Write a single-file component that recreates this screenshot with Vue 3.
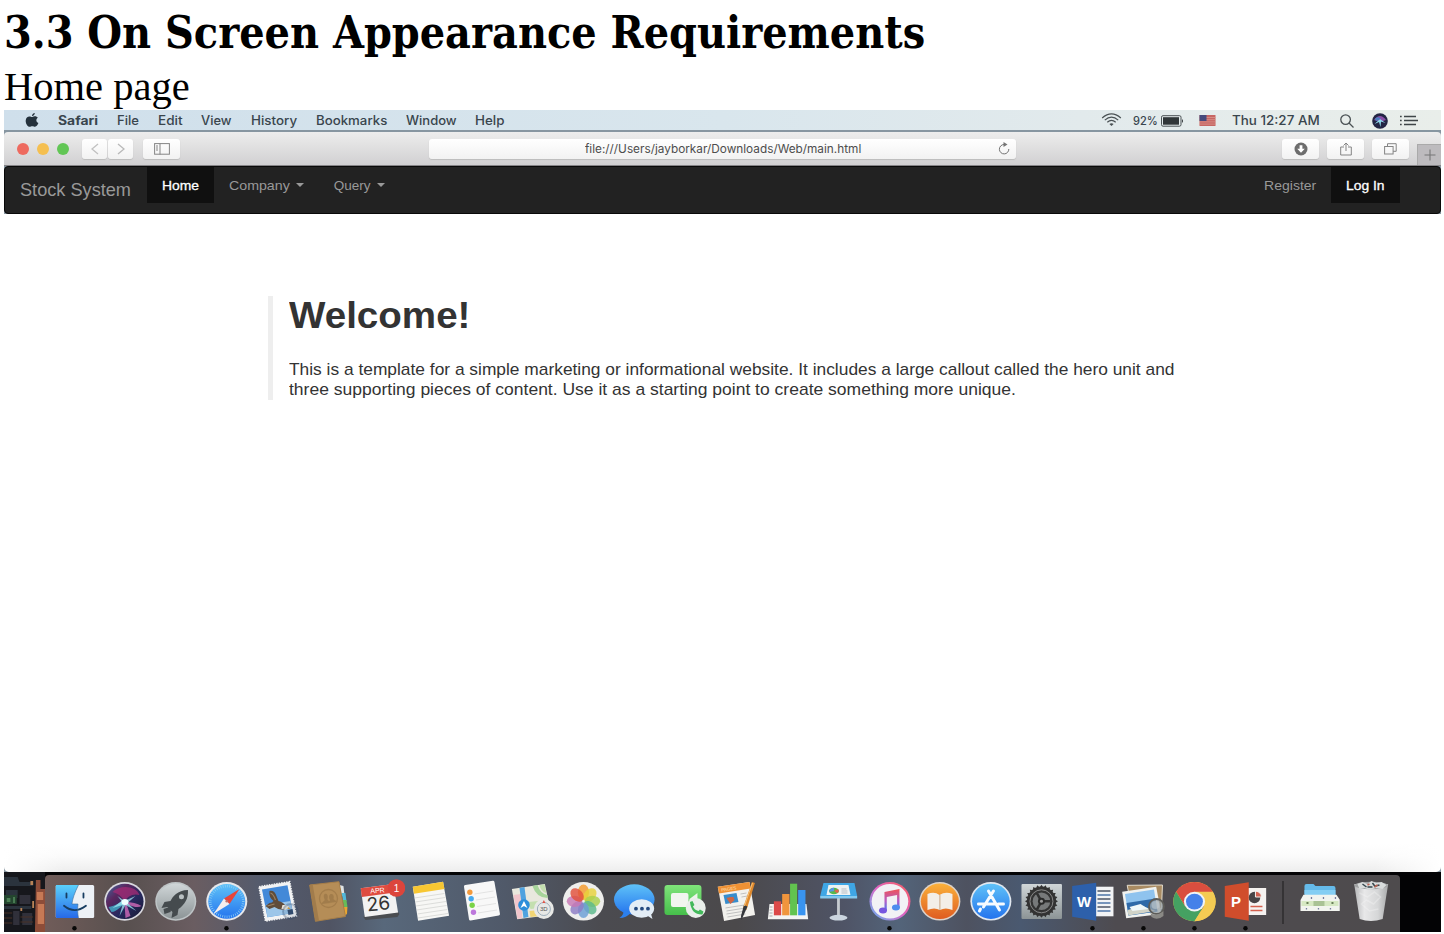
<script setup>
// Stretches a text run horizontally to the given width and reserves that width in the flow.
const vFit = {
  mounted(el, binding) {
    const natural = el.offsetWidth
    el.style.transform = `scaleX(${binding.value / natural})`
    el.style.marginRight = `${binding.value - natural}px`
  },
}

const menus = [
  ['Safari', 40], ['File', 22], ['Edit', 25], ['View', 31], ['History', 46],
  ['Bookmarks', 71], ['Window', 51], ['Help', 30],
]
const petals = ['#f49a2c', '#e8d23a', '#a9cf4c', '#5bb98b', '#6b9fd6', '#8c7cc4', '#c777b5', '#e2503c']
const ticks = Array.from({ length: 24 }, (_, i) => i * 15)
</script>

<template>
  <div class="page">
    <h1 class="doc-title"><span v-fit="921" class="fit">3.3 On Screen Appearance Requirements</span></h1>
    <p class="doc-sub"><span v-fit="186" class="fit">Home page</span></p>

    <div class="screen">
      <div class="menubar">
        <svg class="apple" viewBox="0 0 14 14"><path d="M9.8 0C9.9 1.6 8.5 3.1 7 3 6.9 1.500 8.300.200 9.800 0ZM10 3.300c1.200 0 2.200.600 2.900 1.500-2.300 1.400-1.900 4.400.500 5.300-.600 1.600-1.900 3.700-3.400 3.700-1 0-1.500-.600-2.700-.600s-1.700.600-2.700.600C2.700 13.800.500 10.500.700 7.400.900 4.900 2.500 3.400 4.400 3.400c1.200 0 2 .6 2.900.6S9 3.300 10 3.300Z" fill="#24313c" /></svg>
        <div class="menu-items">
          <span v-for="(m, i) in menus" :key="m[0]" v-fit="m[1]" class="fit" :class="{ strong: i === 0 }">{{ m[0] }}</span>
        </div>
        <div class="status">
          <svg class="wifi" viewBox="0 0 22 15" fill="none" stroke="#4a5154" stroke-width="1.300"><path d="M1 5.300Q11-3.300 21 5.300M3.800 7.600Q11 1.400 18.200 7.600M6.500 9.900Q11 6 15.500 9.900" /><path d="M8.700 11.800Q11 10 13.300 11.800L11 14Z" fill="#4a5154" stroke="none" /></svg>
          <span v-fit="25" class="fit pct">92%</span>
          <svg class="battery" viewBox="0 0 23 12"><rect x=".5" y=".7" width="19.500" height="10.500" rx="1.500" fill="none" stroke="#4a5154" /><rect x="2" y="2.200" width="16" height="7.500" fill="#303638" /><path d="M21 4q2 2 0 4z" fill="#303638" /></svg>
          <svg class="flag" viewBox="0 0 16 11"><rect width="16" height="11" fill="#c76663" /><path d="M0 2.500h16M0 4.700h16M0 6.900h16M0 9.100h16" stroke="#d9958d" stroke-width=".8" /><rect width="7" height="6" fill="#464a7c" /></svg>
          <span v-fit="88" class="fit">Thu 12:27 AM</span>
          <svg class="lens" viewBox="0 0 14 14" fill="none" stroke="#4a5154" stroke-width="1.300"><circle cx="5.600" cy="5.600" r="4.800" /><path d="m9 9 4.500 4.500" /></svg>
          <svg class="mini-siri" viewBox="0 0 16 16"><circle cx="8" cy="8" r="7.800" fill="#232544" /><path d="M2 7Q8-1 14 7L8 9Z" fill="#8a4fa8" /><path d="m2.500 11 5.500-5 5.500 4-4.500-1.500L8.500 14 7 9z" fill="#8fdcee" /><path d="M3 5.500Q7 3 8.500 6L4 8Z" fill="#487fc0" /></svg>
          <svg class="list" viewBox="0 0 18 11" stroke="#3f4648" stroke-width="1.700"><path d="M4 1.500h12M4 5.500h14M4 9.500h12" /><path d="M0 1.500h1.700M0 5.500h1.700M0 9.500h1.700" /></svg>
        </div>
      </div>

      <div class="window">
        <div class="toolbar">
          <div class="lights"><i class="red"></i><i class="amber"></i><i class="green"></i></div>
          <div class="btn nav-btn"><svg viewBox="0 0 8 12"><path d="M7 1 1 6l6 5" fill="none" stroke="#c1c1c1" stroke-width="1.300" /></svg></div>
          <div class="btn nav-btn fwd"><svg viewBox="0 0 8 12"><path d="m1 1 6 5-6 5" fill="none" stroke="#b9b9b9" stroke-width="1.300" /></svg></div>
          <div class="btn side-btn"><svg class="side" viewBox="0 0 16 12" fill="none" stroke="#858585"><rect x=".6" y=".6" width="14.800" height="10.600" /><path d="M6 .5v11M2 3h2M2 5h2M2 7h2" /></svg></div>
          <div class="address">
            <span v-fit="276" class="fit">file:///Users/jayborkar/Downloads/Web/main.html</span>
            <svg class="reload" viewBox="0 0 12 13"><path d="M6 2.500A4.700 4.700 0 1 0 10.800 7" fill="none" stroke="#747474" /><path d="M5.500 0 9.500 2.600 5.500 5z" fill="#747474" /></svg>
          </div>
          <div class="btn r1"><svg class="dl" viewBox="0 0 14 14"><circle cx="7" cy="7" r="6.500" fill="#6d6d6d" /><path d="M5.600 3.200h2.800v3.500h2.400L7 10.800 3.200 6.700h2.400z" fill="#fff" /></svg></div>
          <div class="btn r2"><svg class="share" viewBox="0 0 12 14" fill="none" stroke="#858585"><path d="M4 5H.7v8h10.600V5H8M6 9V1M3.500 3.500 6 1l2.500 2.500" /></svg></div>
          <div class="btn r3"><svg class="tabs" viewBox="0 0 13 12" fill="none" stroke="#858585"><rect x=".6" y="3.500" width="8.500" height="7.500" /><path d="M3.500 3.500V.7h8.700v7.600H9.100" /></svg></div>
          <div class="plus"><svg viewBox="0 0 12 12"><path d="M6 .5v11M.5 6h11" stroke="#777" stroke-width="1.100" /></svg></div>
        </div>

        <nav class="navbar">
          <div class="brand"><span v-fit="111" class="fit">Stock System</span></div>
          <div class="tab on home"><span v-fit="37" class="fit">Home</span></div>
          <div class="tab drop"><span v-fit="61" class="fit">Company</span><i class="caret"></i></div>
          <div class="tab drop"><span v-fit="37" class="fit">Query</span><i class="caret"></i></div>
          <div class="tab register"><span v-fit="52" class="fit">Register</span></div>
          <div class="tab on login"><span v-fit="39" class="fit">Log In</span></div>
        </nav>

        <main class="body">
          <section class="hero">
            <h2><span v-fit="181" class="fit">Welcome!</span></h2>
            <p><span v-fit="885" class="fit">This is a template for a simple marketing or informational website. It includes a large callout called the hero unit and</span></p>
            <p><span v-fit="727" class="fit">three supporting pieces of content. Use it as a starting point to create something more unique.</span></p>
          </section>
        </main>
      </div>

      <footer class="desktop">
        <svg class="city" viewBox="0 0 45 60" preserveAspectRatio="none">
          <rect width="45" height="60" fill="#16171c" />
          <path d="M0 5h15l2 5h15v4H0zM2 18h13v8H2zM0 34h30v3H0z" fill="#2b333d" />
          <path d="M0 23h14v9H0z" fill="#24452f" /><path d="M3 26h4v4H3zM10 25h2v6h-2z" fill="#4c8055" />
          <path d="M17 23h12v9H17zM10 39h7v14h-7zM20 41h11v12H20z" fill="#30303a" />
          <path d="M35 8h5v9h5v43H34z" fill="#8d4d39" /><path d="M36 20h7v8h-7zM37 32h7v20h-7z" fill="#c67955" />
          <path d="M29 9h3v4h-3zM31 29h2v7h-2zM18 36h2v3h-2z" fill="#b88357" />
          <path d="M0 41h9M0 46h9M0 51h9M18 45h14M18 50h14" stroke="#493126" />
        </svg>
        <div class="dock">
          <svg class="icon" viewBox="-25.475 -27 50.95 57">
            <defs>
              <linearGradient id="finder" x2="0" y2="1"><stop stop-color="#5bd0fb" /><stop offset="1" stop-color="#2769e8" /></linearGradient>
              <linearGradient id="silver" x2="0" y2="1"><stop stop-color="#d0d6d8" /><stop offset="1" stop-color="#8c9496" /></linearGradient>
              <linearGradient id="blue" x2="0" y2="1"><stop stop-color="#5fc2f8" /><stop offset="1" stop-color="#2474ee" /></linearGradient>
              <linearGradient id="orange" x2="0" y2="1"><stop stop-color="#fbb13b" /><stop offset="1" stop-color="#df5c20" /></linearGradient>
              <linearGradient id="siri" x2="1" y2="1"><stop stop-color="#3c6ca4" /><stop offset=".3" stop-color="#5b275f" /><stop offset=".6" stop-color="#27295f" /><stop offset="1" stop-color="#171831" /></linearGradient>
              <linearGradient id="green" x2="0" y2="1"><stop stop-color="#7fe47a" /><stop offset="1" stop-color="#46bf4b" /></linearGradient>
              <linearGradient id="note" x2="0" y2="1"><stop stop-color="#f05257" /><stop offset=".55" stop-color="#b45dc8" /><stop offset="1" stop-color="#447bec" /></linearGradient>
              <linearGradient id="ring" x1="1" x2="0" y2="1"><stop stop-color="#fb5a54" /><stop offset=".5" stop-color="#dd66c6" /><stop offset="1" stop-color="#5bb8f6" /></linearGradient>
              <linearGradient id="can"><stop stop-color="#b5b6b8" /><stop offset=".3" stop-color="#e8e8e9" /><stop offset=".7" stop-color="#d5d6d7" /><stop offset="1" stop-color="#a9aaab" /></linearGradient>
            </defs>
            <rect x="-18.700" y="-17" width="38.400" height="33" rx="1.500" fill="#edf1f6" />
            <path d="M-17.700-17H4C0-9-2-3-2.500 2h6C3 7 3.200 12 4 16h-21.700q-1 0-1-1v-31q0-1 1-1Z" fill="url(#finder)" />
            <path d="M-8-8.500v4M9-8.500v4M-10.500 3.800Q0 12.500 11.500 3.800" fill="none" stroke="#173d61" stroke-width="1.800" stroke-linecap="round" /><path d="M4-17C0-9-2-3-2.500 2h6C3 7 3.200 12 4 16" fill="none" stroke="#3b6d9b" stroke-width=".6" />
            <circle cy="26.300" r="2.200" fill="#080808" />
          </svg>

          <svg class="icon" viewBox="-25.475 -27 50.95 57">
            <ellipse cx=".3" cy="-.6" rx="20.500" ry="19.300" fill="#d9d9df" /><ellipse cx=".3" cy="-.6" rx="18.800" ry="17.600" fill="url(#siri)" />
            <path d="M-12-10C-4-18 12-16 15-7 8-9 3-5 0-1-3-6-7-9-12-10Z" fill="#a42c75" fill-opacity=".75" /><path d="M-16 5C-9 4-3 0 0-3l3 3C-3 3-7 10-13 10Z" fill="#43b8d1" fill-opacity=".75" /><path d="M0 0Q11 0 17 4 13 7 2 2L6 14 1 16Z" fill="#d26bba" fill-opacity=".8" /><path d="M0-1 11-6 3 1 12 9 1 3-5 14-2 3-12 6-3-1-7-6Z" fill="#9feaf3" fill-opacity=".75" /><ellipse cx=".500" rx="3.500" ry="3" fill="#f0ffff" />
          </svg>

          <svg class="icon" viewBox="-25.475 -27 50.95 57">
            <ellipse cx=".3" cy="-.6" rx="20.500" ry="19.300" fill="#bec4c6" /><ellipse cx=".3" cy="-.6" rx="19" ry="17.800" fill="url(#silver)" />
            <path d="M12.500-12C2-12-3-5-5-1l-6 1-3 6 6-1 5 5-1 6 6-3 1-6C9 3 13-3 12.500-12Z" fill="#454b4e" /><path d="M-6 5-12 7-11 12-5 10-4 6Z" fill="#454b4e" /><circle cx="6" cy="-5.300" r="2.500" fill="#b9c0c2" />
          </svg>

          <svg class="icon" viewBox="-25.475 -27 50.95 57">
            <ellipse cx=".3" cy="-.6" rx="20.500" ry="19.300" fill="#e6e8eb" /><ellipse cx=".3" cy="-.6" rx="18.500" ry="17.300" fill="url(#blue)" />
            <ellipse cx=".3" cy="-.6" rx="16.500" ry="15.300" fill="none" stroke="#8ed0f5" stroke-width="2.500" stroke-dasharray=".7 1.500" />
            <path d="M13-13-2.500-3.500 3 2Z" fill="#e8453b" /><path d="M-13 12-2.500-3.500 3 2Z" fill="#f4eeee" /><circle cx=".3" cy="-.7" r="1.300" fill="#bc706c" />
            <circle cy="26.300" r="2.200" fill="#080808" />
          </svg>

          <svg class="icon" viewBox="-25.475 -27 50.95 57">
            <path d="M-18.500-15.300 12.200-20.300 18.900 14-12 19Z" fill="#f2f3f4" stroke="#f2f3f4" stroke-width="1.600" stroke-dasharray="1.500 1" />
            <path d="M-15.500-12.500 10-16.700 15.500 11-10 15.300Z" fill="#4389d8" /><path d="M-12 3 13-1 15.500 11-10 15.300Z" fill="#9cc6e9" />
            <path d="M-8-11Q-3-12-1-6L1-1Q6 0 9 5L6 8Q1 8-3 5L-8 7-12 4-8 1Q-5 1-4-1-9-5-8-11Z" fill="#5f4c3b" /><path d="M-7-9q3 1 5 7M-10 4l7-2" fill="none" stroke="#9a8061" stroke-width="1.200" /><path d="m5 3 4 0 3 2-4 3-4-1Z" fill="#ece7da" /><path d="m11 5 2 2-3 0z" fill="#e2a43a" />
            <circle cx="13" cy="9.500" r="7.500" fill="#31486a" fill-opacity=".12" stroke="#31486a" stroke-opacity=".3" stroke-width="2" /><path d="m10 8 5-1 1 5-5 1z" fill="#304a6d" />
          </svg>

          <svg class="icon" viewBox="-25.475 -27 50.95 57">
            <path d="m11-17 4 1 1 9-3 1z" fill="#e0e4e5" /><path d="m13-9 4 0 1 8-3 1z" fill="#53b9da" /><path d="m14-2 4 0 1 7-3 1z" fill="#67bb58" /><path d="m15 5 4 0-.5 7-2.500 2z" fill="#e9a631" />
            <path d="M-18.800-17 10.500-20.300 17 14.500-13 19.300Z" fill="#b58d57" stroke="#a77e48" stroke-linejoin="round" /><path d="M-18.800-17l3-.4L-9.500 18.500-13 19.300Z" fill="#a17c4c" />
            <circle cy="-3.500" r="9" fill="none" stroke="#a37d4b" stroke-width="1.300" /><path d="M-7 2c1-3 4-3 3-5-3-7 5-7 3 0 0 2 2 1 3 4M0 1c1-3 2-2 1-4-2-7 6-6 4 0 0 1 3 1 3 3" fill="#a17c4b" />
          </svg>

          <svg class="icon" viewBox="-25.475 -27 50.95 57">
            <path d="m-15 13 33-4 2 3-2 3-32 3-2-3z" fill="#4a4d51" /><path d="M-18.700-13.700 14-18 18.600 10.500-14.700 15Z" fill="#f2f2f2" /><path d="M-18.700-13.700 14-18 15.500-9.500-17.700-5Z" fill="#df4c40" />
            <text x="-9" y="-8.500" class="apr" transform="rotate(-5 -9 -9)">APR</text><text x="-12" y="9.500" class="day" transform="rotate(-6 -12 10)">26</text>
            <circle cx="17" cy="-14" r="8.800" fill="#dc453c" /><text x="17" y="-10.500" class="badge">1</text>
          </svg>

          <svg class="icon" viewBox="-25.475 -27 50.95 57">
            <path d="M-17.700-15.300 12.600-20.300 18.600 13.700-12.400 18.700Z" fill="#f7f7f5" /><path d="M-17.700-15.300 12.600-20.300 14-13-16.500-8.300Z" fill="#f7c733" />
            <path d="m-16-4 30-4.500M-15.300 0l30-4.500M-14.500 4l30-4.500M-13.800 8l30-4.500M-13 12l30-4.500M-12.500 16l30-4.500" stroke="#d4d5d3" stroke-width=".8" />
          </svg>

          <svg class="icon" viewBox="-25.475 -27 50.95 57">
            <path d="M-16-15.500 11.500-19.800 17 12-11 17Z" fill="#f8f8f8" stroke="#f8f8f8" stroke-width="3" stroke-linejoin="round" />
            <path d="m-7-8 19-3M-5.500-2l19-3M-4.500 4.500l19-3M-3.500 11l19-3" stroke="#ddd" stroke-width=".8" /><circle cx="-11.600" cy="-9.700" r="2.700" fill="#f39a3d" /><circle cx="-10.300" cy="-3.300" r="2.700" fill="#44a9ef" /><circle cx="-9.300" cy="3.300" r="2.700" fill="#7bd348" /><circle cx="-8" cy="10.300" r="2.700" fill="#bd78dc" />
          </svg>

          <svg class="icon" viewBox="-25.475 -27 50.95 57">
            <path d="M-20.600-13 12.400-18 19 13-15.300 17.300Z" fill="#e9e8dd" /><path d="M0-16Q4-4 15-4V-7Q8-8 5-17Z" fill="#a6d49a" /><path d="m7-17 5-.7 2 9Q8-11 7-17ZM-4 0 15-2 17 5-2 7Z" fill="#c4dfb0" /><path d="m-19-7 7-1 2 24-5 1Z" fill="#f1c5cb" /><path d="m-13-14 5-1L-4 15l-5 1Z" fill="#4fa2df" /><path d="m-3 9 20-2 2 6-21 2Z" fill="#f1d575" />
            <circle cx="-8.500" cy="3" r="5.800" fill="#2c8eda" /><path d="m-8.500-1 3.500 7-3.500-2L-12 6Z" fill="#fff" />
            <circle cx="11.400" cy="7" r="10" fill="#e7e8e6" /><circle cx="11.400" cy="7" r="6.500" fill="none" stroke="#9cadba" /><text x="11.400" y="9.200" class="three">3D</text><path d="m11.400-2 1.500 3h-3z" fill="#df5345" />
          </svg>

          <svg class="icon" viewBox="-25.475 -27 50.95 57">
            <ellipse cy="-.7" rx="20.500" ry="19.300" fill="#eeeeec" /><g transform="translate(0 -.7)"><ellipse v-for="(c, i) in petals" :key="c" cy="-9" rx="5.600" ry="7.700" :fill="c" fill-opacity=".82" :transform="`rotate(${i * 45})`" /></g>
          </svg>

          <svg class="icon" viewBox="-25.475 -27 50.95 57">
            <ellipse cx="-.2" cy="-2.500" rx="20.300" ry="15.200" fill="url(#blue)" /><path d="M-11 7q1 6-4 9 7 0 11-5z" fill="#2c80ee" /><ellipse cx="7.200" cy="6.500" rx="12.500" ry="9.300" fill="#e3edf6" /><path d="m12 13 6 4-2-7z" fill="#e3edf6" /><g fill="#244a80"><circle cx="1.500" cy="6.700" r="1.900" /><circle cx="7.500" cy="6.700" r="1.900" /><circle cx="13.500" cy="6.700" r="1.900" /></g>
          </svg>

          <svg class="icon" viewBox="-25.475 -27 50.95 57">
            <rect x="-21" y="-17" width="37" height="30" rx="3" fill="url(#green)" /><rect x="-14.500" y="-9" width="17.500" height="14" rx="2" fill="#f1f5ef" /><path d="m4-3 8-6V5L4 2Z" fill="#edf4ea" /><circle cx="10.300" cy="6" r="10" fill="#e9eeea" /><path d="M4.500 0 7-1 9 3 7.500 4.500Q9 8 13 9l1.500-1.500 3.500 2-1 3Q6 13 4.500 0Z" fill="#43b95b" />
          </svg>

          <svg class="icon" viewBox="-25.475 -27 50.95 57">
            <path d="M-18.700-15.300 13-20 18.600 13-12.400 19Z" fill="#f2f1ed" /><path d="M-18.700-15.300 13-20 14-13.500-17.500-8.500Z" fill="#ef9134" /><text x="-15" y="-10.500" class="pages" transform="rotate(-8 -15 -10)">PAGES</text><path d="m-13-7 13-2 2 9-13 2Z" fill="#388dcc" /><path d="m-10-4 4-1 3 0 1 3-4 4z" fill="#ce6644" /><path d="m4-8 6-1M5-5l6-1M-11 6 8 3M-10 9 9 6M-10 12l19-3M-9 15l18-3" stroke="#bbb" stroke-width=".9" />
            <path d="m15.500-20 3 1L10 8 6.500 6Z" fill="#df892d" /><path d="m7.500 3 3.500 1.500L5 18 4.500 14Z" fill="#34363b" /><path d="m16-19-8 23" stroke="#f7c276" />
          </svg>

          <svg class="icon" viewBox="-25.475 -27 50.95 57">
            <path d="M-18 2h37l1.700 15.300h-40.300Z" fill="#f4f4f3" /><path d="M-18 5h3M-18 8h3M-18 11h3M-18 14h3" stroke="#aaa" /><rect x="-13.600" y="-.7" width="7.300" height="14" fill="#dc4949" /><rect x="-5.300" y="-8" width="7.300" height="21.300" fill="#f0953d" /><rect x="2.600" y="-18.300" width="7.100" height="31.600" fill="#62c34f" /><rect x="10.700" y="-12" width="7.300" height="25.300" fill="#3994f0" />
          </svg>

          <svg class="icon" viewBox="-25.475 -27 50.95 57">
            <path d="M-1.400-6h2.800v21h-2.800z" fill="#c6cbd0" /><ellipse cy="15.700" rx="9" ry="2.900" fill="#cbd5df" /><path d="M-15-19h31l2.700 13h-37Z" fill="#3fa6e5" /><path d="M-18.300-6h37v2.500h-37z" fill="#83c9ef" /><path d="m-10-17 20-.1L12-7h-24Z" fill="#edf2f4" /><ellipse cx="-4.500" cy="-11" rx="5" ry="3.200" fill="#55b84e" /><path d="M-4.500-11v-3.200Q-9-14-9.500-10Z" fill="#5896e2" /><path d="m-4.500-11 4-2q2 3-1 4z" fill="#e26250" /><path d="M3-13h5M3-11h6M3-9h6" stroke="#b8bec4" />
          </svg>

          <svg class="icon" viewBox="-25.475 -27 50.95 57">
            <ellipse cx=".5" cy="-.7" rx="20.500" ry="19.300" fill="url(#ring)" /><ellipse cx=".5" cy="-.7" rx="18.300" ry="17.300" fill="#f2f1f5" /><path d="M-5-10 10-13V6h-2.400V-7L-2.700-5V9H-5Z" fill="url(#note)" /><ellipse cx="-6.500" cy="8.500" rx="4" ry="3" fill="#7755df" /><ellipse cx="6.500" cy="5.600" rx="4" ry="3" fill="#4c8def" /><circle cy="26.300" r="2.200" fill="#080808" />
          </svg>

          <svg class="icon" viewBox="-25.475 -27 50.95 57">
            <ellipse cx=".4" cy="-.7" rx="20.500" ry="19.300" fill="#ddd3ca" /><ellipse cx=".4" cy="-.7" rx="19" ry="17.800" fill="url(#orange)" /><path d="M-12-8Q-5-11 0-7 6-11 13-8V8Q6 5 .4 8-5 5-12 8Z" fill="#f3eee8" /><path d="M.4-7V8" stroke="#d1b79d" stroke-width="1.300" />
          </svg>

          <svg class="icon" viewBox="-25.475 -27 50.95 57">
            <ellipse cx=".4" cy="-.7" rx="20.500" ry="19.300" fill="#e1e8f0" /><ellipse cx=".4" cy="-.7" rx="18.800" ry="17.600" fill="url(#blue)" /><path d="M-2-11 9 8M3-11-7 5M-12 2H4M8 2h5M-10 7l-1 2" fill="none" stroke="#f7fbff" stroke-width="3" stroke-linecap="round" />
          </svg>

          <svg class="icon" viewBox="-25.475 -27 50.95 57">
            <rect x="-20" y="-18" width="40.500" height="35" rx="1" fill="url(#silver)" /><circle cy="-.7" r="14.700" fill="#333" /><g transform="translate(0 -.7)"><path v-for="a in ticks" :key="a" d="m-1-15 1-1.500 1 1.500v2h-2z" fill="#333" :transform="`rotate(${a})`" /><circle r="11.500" fill="none" stroke="#888" /><circle r="8.800" fill="#77797a" /><path d="M0 0-4.500-8M0 0h9M0 0l-4.500 8" stroke="#303030" stroke-width="2.500" /><circle r="3.500" fill="#292929" /><circle r="1.500" fill="#999" /></g>
          </svg>

          <svg class="icon" viewBox="-25.475 -27 50.95 57">
            <path d="M2-15.300h19v29.600H2z" fill="#f2f3f5" /><path d="M5-11h13M5-3h13M5 5h13" stroke="#4e5665" stroke-width="1.500" /><path d="M5-7h13M5 1h13M5 9h13" stroke="#4e75a8" stroke-width="1.500" /><path d="M-20.300-16 3.700-19.300v38l-24-4Z" fill="#2d60ab" /><text x="-8.500" y="5.300" class="office">W</text><circle cy="26.300" r="2.200" fill="#080808" />
          </svg>

          <svg class="icon" viewBox="-25.475 -27 50.95 57">
            <path d="m-16.300-16.700 35.300-.3-1 24-30-2Z" fill="#a98b62" stroke="#e4ddce" /><path d="M-21.300-10.300 12.700-15.300 18 12-17.300 16.300Z" fill="#f1f2ef" /><path d="M-18.500-8 10.500-12.500 14 9.500-15 13.500Z" fill="#8fc3ee" /><path d="M-17 1 12-3.500 14 9.500-15 13.500Z" fill="#2f69a8" /><path d="m-16 8 15-4 13 5L-15 13.500Z" fill="#d2d4c8" /><path d="m-14 5 11-3 8 5-16 2z" fill="#f0f7f9" /><circle cx="13" cy="4.500" r="7.500" fill="#9aa3a8" fill-opacity=".75" stroke="#5d5c58" stroke-width="1.800" /><path d="M7 11Q13 15 20 9v5q-6 5-12 1z" fill="#8a8985" /><circle cx="12" cy="3" r="4" fill="#c3cdd3" fill-opacity=".55" /><circle cy="26.300" r="2.200" fill="#080808" />
          </svg>

          <svg class="icon" viewBox="-25.475 -27 50.95 57">
            <g transform="translate(0 -.4) scale(1.060 .98)"><circle r="20" fill="#f2c84c" /><path d="M0-20A20 20 0 0 0-17.300-10L-8.700 5-1 10H9L17.300-10A20 20 0 0 0 0-20Z" fill="#d94e3f" /><path d="M-17.300-10A20 20 0 0 0 0 20L8.700 5H-8.700Z" fill="#45a162" /><path d="M17.300-10H0L8.700 5 0 20A20 20 0 0 0 17.300-10Z" fill="#f4cb53" /><circle r="10" fill="#f0f3f7" /><circle r="8" fill="#4481e9" /></g><circle cy="26.300" r="2.200" fill="#080808" />
          </svg>

          <svg class="icon" viewBox="-25.475 -27 50.95 57">
            <path d="M2-14h18.700v27H2z" fill="#f5f2f0" /><circle cx="9" cy="-4.500" r="5.800" fill="#474446" /><path d="M10-5v-6q6 1 6 6z" fill="#d16353" stroke="#f5f2f0" /><path d="M5 4.500h12M5 8.500h12" stroke="#d4604e" stroke-width="1.400" /><path d="M-20.700-16 3.300-19.700v38.400l-24-4Z" fill="#d04d2c" /><text x="-9.500" y="5.300" class="office">P</text><circle cy="26.300" r="2.200" fill="#080808" />
          </svg>

          <i class="separator"></i>

          <svg class="icon folder" viewBox="-25.475 -27 50.95 57">
            <path d="M-15-8v-8q0-2 2-2h7l2 2h18q2 0 2 2v7Z" fill="#65bae9" /><path d="M-15-12h31v6h-31z" fill="#84cef3" /><path d="m-16-7.300 33 0 3.300 5V9H-19V-2Z" fill="#f2f4ef" /><path d="M-18-1h37v5h-37z" fill="#d6e8c3" /><path d="M-6-1H5v5H-6z" fill="#a9c295" /><path d="M-8-5v2M4-5v2M16-5v2M-13 6v1.500M-1 6v1.500M11 6v1.500" stroke="#777d9f" stroke-width="1.300" /><path d="M-13 1h2M12 1h2" stroke="#6b815a" stroke-width="2" />
          </svg>
          <svg class="icon" viewBox="-25.475 -27 50.95 57">
            <path d="m-16.300-18 34 0-5.500 35q-12 4-23 0Z" fill="url(#can)" /><ellipse cx=".7" cy="-16.500" rx="16.500" ry="3.800" fill="#a0a2a3" /><path d="m-13-18 5-2 5 2 4-3 5 2 5-1 5 3-4 4-7-1-5 2-6-2-5 1Z" fill="#d9dcdc" /><path d="m-8-18 4 3M2-19l3 4M9-17l-4 1M-3-15h5" stroke="#36474d" stroke-width="1.500" /><path d="m-3-17 2-1M4-15l3-2" stroke="#b96454" stroke-width="1.600" /><path d="m-11-9 8 4 7-5 6 5-7 7-7-4-5 4 8 7 9-2" fill="none" stroke="#f5f5f5" stroke-opacity=".35" stroke-width="1.500" />
          </svg>
        </div>
      </footer>
    </div>
  </div>
</template>

<style>
html, body { margin: 0; background: #fff; overflow: hidden; }
</style>

<style scoped>
.page { width: 1444px; height: 934px; box-sizing: border-box; padding: 0 3px 2px 4px; background: #fff; overflow: hidden; }
.fit { display: inline-block; flex: none; white-space: nowrap; transform-origin: 0 50%; }
h1, h2, p { margin: 0; }
.doc-title { height: 66px; font: bold condensed 45px/66px "DejaVu Serif Condensed", "DejaVu Serif", serif; color: #000; }
.doc-sub { height: 44px; font: 39px/41px "Liberation Serif", serif; color: #000; }
.screen { width: 1437px; height: 822px; background: #fff; display: flex; flex-direction: column; }
.menubar { height: 20px; flex: none; display: flex; align-items: center; padding: 0 23px 0 21px; background: linear-gradient(90deg, #cfdfeb, #d9e6ed 50%, #e2eaec 75%, #e9eeea); border-bottom: 2px solid #8796a1; font: 500 12.500px/20px Inter, sans-serif; color: #39454d; }
.apple { width: 14px; height: 14px; margin-right: 19px; }
.menu-items { display: flex; gap: 18.900px; position: relative; top: 1px; }
.strong { font-weight: 700; }
.status { margin-left: auto; display: flex; align-items: center; }
.status .fit { position: relative; top: 1px; }
.pct { font-size: 11.500px; }
.wifi { width: 21px; height: 14px; margin-right: 11px; }
.battery { width: 23px; height: 12px; margin-left: 4px; position: relative; top: 1px; }
.flag { width: 17px; height: 11px; margin: 1px 16px 0 15px; }
.lens { width: 14px; height: 14px; margin: 1px 18px 0 20px; }
.mini-siri { width: 16px; height: 16px; margin: 1px 12px 0 0; }
.list { width: 18px; height: 11px; margin-top: 1px; }
.window { height: 740px; flex: none; background: #8796a1; }
.toolbar { height: 34px; box-sizing: border-box; display: flex; align-items: center; background: linear-gradient(#ededed, #e3e3e3 35%, #d1d0d2); border-bottom: 1px solid #858487; border-radius: 4px 4px 0 0; padding-left: 13px; }
.lights { display: flex; gap: 8px; margin-right: 13px; }
.lights i { width: 12px; height: 12px; border-radius: 50%; }
.red { background: #ee6a5f; }
.amber { background: #f5bf50; }
.green { background: #62c655; }
.btn { height: 20px; width: 37px; flex: none; display: flex; align-items: center; justify-content: center; border-radius: 3px; background: linear-gradient(#fff, #f2f2f2); box-shadow: 0 1px 1px #bcbcbc; }
.nav-btn { width: 25px; }
.nav-btn svg { width: 8px; height: 12px; }
.fwd { margin: 0 10px 0 1px; }
.side { width: 16px; height: 12px; }
.address { width: 587px; height: 20px; margin-left: 249px; flex: none; display: flex; align-items: center; border-radius: 3px; background: linear-gradient(#fff, #f2f2f2); box-shadow: 0 1px 1px #bcbcbc; font: 11.500px/20px Inter, sans-serif; color: #4d4d4d; padding-left: 156px; box-sizing: border-box; }
.address .fit { position: relative; top: .500px; }
.reload { width: 12px; height: 13px; margin-left: 137px; }
.r1 { margin-left: 266px; }
.r2, .r3 { margin-left: 8px; }
.dl { width: 14px; height: 14px; }
.share { width: 12px; height: 14px; }
.tabs { width: 13px; height: 12px; }
.plus { width: 24px; height: 21px; align-self: flex-end; margin-left: auto; background: #bdbbbe; border-left: 1px solid #aaa; border-top: 1px solid #aaa; box-sizing: border-box; display: grid; place-items: center; }
.plus svg { width: 12px; height: 12px; }
.navbar { height: 48px; box-sizing: border-box; display: flex; align-items: flex-start; background: #222; border: 1px solid #090909; border-radius: 4px; color: #999; font: 13.500px/38px "Liberation Sans", Arial, sans-serif; padding-left: 15px; }
.brand { font-size: 17.500px; line-height: 46px; margin-right: 16px; }
.tab { height: 36px; display: flex; align-items: center; }
.tab .fit { position: relative; top: 1px; }
.on { background: #101010; color: #fff; padding: 0 15px; -webkit-text-stroke: .3px #fff; }
.home { margin-right: 15px; }
.drop { margin-right: 30px; gap: 6px; }
.caret { border: 4px solid transparent; border-top-color: #999; border-bottom: 0; }
.register { margin-left: auto; margin-right: 15px; }
.login { margin-right: 40px; }
.body { height: 658px; box-sizing: border-box; padding: 82px 0 0 264px; background: linear-gradient(90deg, #fff 0, #fff0 60px, #fff0 1370px, #fff 1437px), linear-gradient(#fff 630px, #fbfbfb 642px, #eee 657px); border-radius: 0 0 5px 5px; }
.hero { height: 104px; box-sizing: border-box; border-left: 5px solid #eee; padding-left: 16px; color: #333; }
.hero h2 { font: bold 36px/40px "Liberation Sans", Arial, sans-serif; margin-bottom: 24px; }
.hero p { font: 17px/20px "Liberation Sans", Arial, sans-serif; }
.desktop { height: 60px; flex: none; display: flex; align-items: flex-end; background: #030305; }
.city { width: 41px; height: 60px; flex: none; }
.dock { width: 1355px; height: 57px; display: flex; align-items: flex-start; border-radius: 4px 4px 0 0; padding-left: 3.500px; box-sizing: border-box; background: linear-gradient(90deg, #705c59, #58504f 6%, #6a5d61 11%, #545b6d 16%, #505463 21%, #58687b 25%, #505969 34%, #4b4b50 41%, #4b494b 51%, #4f5466 59%, #53647a 63%, #4e5260 68%, #4a5970 72%, #4e4b50 79%, #4e4b4d); }
.icon { width: 50.950px; height: 57px; flex: none; }
.separator { width: 2px; height: 43px; margin: 6px 10px 0 10.700px; background: #353335; }
.folder { margin-left: 0; }
text { font-family: "Liberation Sans", Arial, sans-serif; }
.apr { font-size: 7px; fill: #fff; }
.day { font-family: Inter, sans-serif; font-size: 19px; fill: #333; }
.badge { font-size: 10px; fill: #fff; text-anchor: middle; }
.three { font-size: 6px; fill: #555; text-anchor: middle; }
.pages { font-size: 4.500px; fill: #ffe1ba; }
.office { font-size: 15px; font-weight: bold; fill: #fff; text-anchor: middle; }
</style>
